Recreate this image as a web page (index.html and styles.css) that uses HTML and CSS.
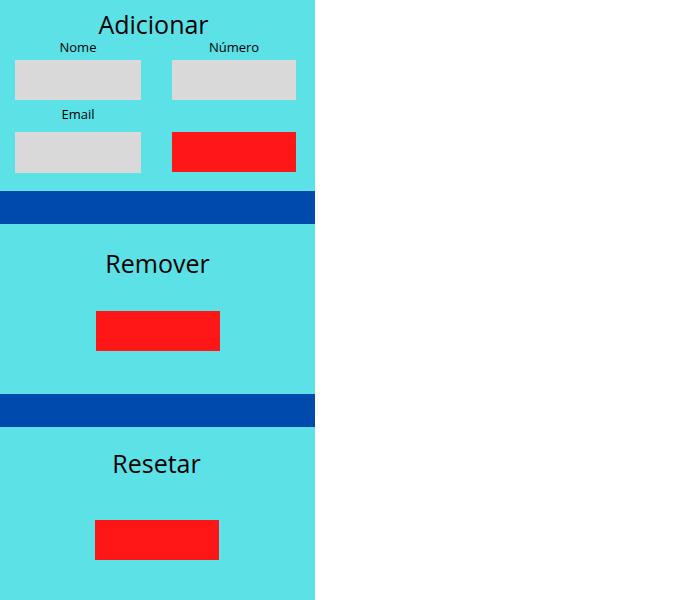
FILE: index.html
```html
<!DOCTYPE html>
<html lang="pt">
<head>
<meta charset="utf-8">
<meta name="viewport" content="width=device-width, initial-scale=1">
<title>Contatos</title>
<link rel="stylesheet" href="styles.css">
</head>
<body>
<main class="sidebar">
  <form class="panel panel-add">
    <h2 class="title">Adicionar</h2>
    <div class="fields">
      <div class="field">
        <label class="label" for="nome">Nome</label>
        <input class="input" id="nome" type="text">
      </div>
      <div class="field">
        <label class="label" for="numero">Número</label>
        <input class="input" id="numero" type="tel">
      </div>
      <div class="field field-last">
        <label class="label" for="email">Email</label>
        <input class="input input-email" id="email" type="email">
      </div>
      <div class="field field-action">
        <button class="button button-add" type="button" aria-label="Adicionar"></button>
      </div>
    </div>
  </form>
  <section class="panel panel-action">
    <h2 class="title">Remover</h2>
    <button class="button" type="button" aria-label="Remover"></button>
  </section>
  <section class="panel panel-action panel-reset">
    <h2 class="title">Resetar</h2>
    <button class="button" type="button" aria-label="Resetar"></button>
  </section>
</main>
</body>
</html>
```
FILE: styles.css
```css
* {
  box-sizing: border-box;
}

body {
  margin: 0;
  background: #fff;
  color: #000;
  font-family: "Open Sans", "Noto Sans", sans-serif;
}

.sidebar {
  display: flex;
  flex-direction: column;
  width: 45%;
  min-height: 100vh;
  background: #5ce1e6;
}

.panel {
  display: flex;
  flex-direction: column;
  align-items: center;
}

.panel-add {
  padding: 8px 8px 18px 0;
}

.panel-action {
  gap: 31px;
  padding: 23px 0 43px;
  border-top: 33px solid #004aad;
}

.panel-reset {
  gap: 40px;
  padding: 20px 2px 40px 0;
}

.title {
  margin: 0;
  font-size: 25px;
  font-weight: 400;
  line-height: 33px;
}

.fields {
  display: grid;
  grid-template-columns: 126fr 124fr;
  gap: 8px 31px;
  width: 100%;
  padding: 0 11px 0 15px;
}

.field {
  display: flex;
  flex-direction: column;
  gap: 6px;
}

.field-last {
  gap: 11px;
}

.field-action {
  justify-content: flex-end;
  padding-bottom: 1px;
}

.label {
  font-size: 13px;
  line-height: 13px;
  text-align: center;
}

.input {
  width: 100%;
  height: 40px;
  padding: 0 8px;
  border: 0;
  border-radius: 0;
  background: #d9d9d9;
  font: inherit;
}

.input-email {
  height: 41px;
}

.button {
  width: 124px;
  height: 40px;
  padding: 0;
  border: 0;
  background: #ff1616;
}

.button-add {
  width: 100%;
}
```
